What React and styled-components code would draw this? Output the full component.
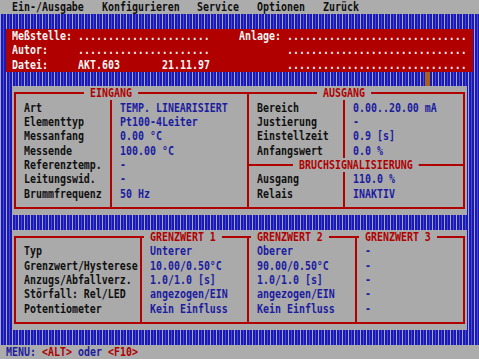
import React from "react";
import styled, { createGlobalStyle } from "styled-components";

// DOS text screen: 80 columns x 25 rows, one cell = 479/80 x 359/25 px
const COLS = 80;
const ROWS = 25;
const CELL_W = 479 / COLS;
const CELL_H = 359 / ROWS;

const tones = {
  black: "#101010",
  blue: "#1c1ca0",
  red: "#b00000",
  white: "#f6f6f6",
};

const Global = createGlobalStyle`
  html, body {
    margin: 0;
    padding: 0;
    background: #1a1ab4;
  }
`;

const Screen = styled.div`
  width: 479px;
  height: 359px;
  display: grid;
  grid-template-columns: repeat(${COLS}, ${CELL_W}px);
  grid-template-rows: repeat(${ROWS}, ${CELL_H}px);
  overflow: hidden;
  background-color: #1a1ab0;
  background-image: repeating-linear-gradient(
    90deg,
    #a4a4f4 0 1px,
    #1a1ab0 1px 3px,
    #4848dc 3px 4px,
    #1a1ab0 4px 6px
  );
  font-family: "DejaVu Sans Mono", "Liberation Mono", monospace;
  font-weight: bold;
  font-size: 12.5px;
`;

const Bar = styled.div`
  grid-column: 1 / -1;
  grid-row: ${(p) => p.$r + 1};
  background: #acacac;
`;

const RedPanel = styled.div`
  grid-column: ${(p) => p.$c + 1} / span ${(p) => p.$w};
  grid-row: ${(p) => p.$r + 1} / span ${(p) => p.$h};
  background: #b00000;
`;

const Panel = styled.div`
  grid-column: ${(p) => p.$c + 1} / span ${(p) => p.$w};
  grid-row: ${(p) => p.$r + 1} / span ${(p) => p.$h};
  background: #aaaaaa;
`;

const Frame = styled.div`
  grid-column: ${(p) => p.$c + 1} / span ${(p) => p.$w};
  grid-row: ${(p) => p.$r + 1} / span ${(p) => p.$h};
  margin: 6px 2px;
  border: 2px solid #b00000;
`;

const VLine = styled.div`
  grid-column: ${(p) => p.$c + 1};
  grid-row: ${(p) => p.$r + 1} / span ${(p) => p.$h};
  justify-self: center;
  width: 2px;
  margin: 7px 0;
  background: #b00000;
`;

const HLine = styled.div`
  grid-column: ${(p) => p.$c + 1} / span ${(p) => p.$w};
  grid-row: ${(p) => p.$r + 1};
  align-self: center;
  height: 2px;
  margin: 0 3px;
  background: #b00000;
`;

const Mark = styled.div`
  grid-column: ${(p) => p.$c + 1};
  grid-row: ${(p) => p.$r + 1};
  justify-self: center;
  width: 5px;
  background: #a4601c;
`;

// one run of characters starting at a given cell; glyphs squeezed to the 6px cell
const Text = styled.span`
  grid-column: ${(p) => p.$c + 1};
  grid-row: ${(p) => p.$r + 1};
  justify-self: start;
  align-self: center;
  width: max-content;
  white-space: pre;
  line-height: 14px;
  color: ${(p) => tones[p.$tone || "black"]};
  background: ${(p) => (p.$title ? "#aaaaaa" : "transparent")};
  transform: scaleX(0.7956);
  transform-origin: 0 50%;
`;

const menu = [
  ["Ein-/Ausgabe", 2],
  ["Konfigurieren", 17],
  ["Service", 33],
  ["Optionen", 43],
  ["Zurück", 54],
];

const dots = (n) => ".".repeat(n);

const header = [
  ["Meßstelle:", 2, 2],
  [dots(22), 13, 2],
  ["Anlage:", 40, 2],
  [dots(30), 48, 2],
  ["Autor:", 2, 3],
  [dots(22), 13, 3],
  [dots(30), 48, 3],
  ["Datei:", 2, 4],
  ["AKT.603", 13, 4],
  ["21.11.97", 27, 4],
  [dots(30), 48, 4],
];

const eingang = [
  ["Art", "TEMP. LINEARISIERT"],
  ["Elementtyp", "Pt100-4Leiter"],
  ["Messanfang", "0.00 °C"],
  ["Messende", "100.00 °C"],
  ["Referenztemp.", "-"],
  ["Leitungswid.", "-"],
  ["Brummfrequenz", "50 Hz"],
];

const ausgang = [
  ["Bereich", "0.00..20.00 mA", 7],
  ["Justierung", "-", 8],
  ["Einstellzeit", "0.9 [s]", 9],
  ["Anfangswert", "0.0 %", 10],
  ["Ausgang", "110.0 %", 12],
  ["Relais", "INAKTIV", 13],
];

const grenzwerte = [
  ["Typ", "Unterer", "Oberer", "-"],
  ["Grenzwert/Hysterese", "10.00/0.50°C", "90.00/0.50°C", "-"],
  ["Anzugs/Abfallverz.", "1.0/1.0 [s]", "1.0/1.0 [s]", "-"],
  ["Störfall: Rel/LED", "angezogen/EIN", "angezogen/EIN", "-"],
  ["Potentiometer", "Kein Einfluss", "Kein Einfluss", "-"],
];

export default function App() {
  return (
    <>
      <Global />
      <Screen>
        <Bar $r={0} />
        <Bar $r={24} />
        <RedPanel $c={1} $r={2} $w={78} $h={3} />
        <Mark $c={71} $r={5} />

        <Panel $c={2} $r={6} $w={76} $h={9} />
        <Frame $c={2} $r={6} $w={76} $h={9} />
        <VLine $c={18} $r={6} $h={9} />
        <VLine $c={41} $r={6} $h={9} />
        <VLine $c={57} $r={6} $h={9} />
        <HLine $c={41} $r={11} $w={37} />

        <Panel $c={2} $r={16} $w={76} $h={7} />
        <Frame $c={2} $r={16} $w={76} $h={7} />
        <VLine $c={23} $r={16} $h={7} />
        <VLine $c={41} $r={16} $h={7} />
        <VLine $c={59} $r={16} $h={7} />

        {menu.map(([label, c]) => (
          <Text key={label} $c={c} $r={0}>
            {label}
          </Text>
        ))}

        {header.map(([txt, c, r]) => (
          <Text key={`${c}-${r}`} $c={c} $r={r} $tone="white">
            {txt}
          </Text>
        ))}

        <Text $c={14} $r={6} $tone="red" $title>
          {" EINGANG "}
        </Text>
        <Text $c={53} $r={6} $tone="red" $title>
          {" AUSGANG "}
        </Text>
        <Text $c={49} $r={11} $tone="red" $title>
          {" BRUCHSIGNALISIERUNG "}
        </Text>
        {eingang.map(([label, value], i) => (
          <React.Fragment key={label}>
            <Text $c={4} $r={7 + i}>{label}</Text>
            <Text $c={20} $r={7 + i} $tone="blue">{value}</Text>
          </React.Fragment>
        ))}
        {ausgang.map(([label, value, r]) => (
          <React.Fragment key={label}>
            <Text $c={43} $r={r}>{label}</Text>
            <Text $c={59} $r={r} $tone="blue">{value}</Text>
          </React.Fragment>
        ))}

        <Text $c={24} $r={16} $tone="red" $title>
          {" GRENZWERT 1 "}
        </Text>
        <Text $c={42} $r={16} $tone="red" $title>
          {" GRENZWERT 2 "}
        </Text>
        <Text $c={60} $r={16} $tone="red" $title>
          {" GRENZWERT 3 "}
        </Text>
        {grenzwerte.map(([label, g1, g2, g3], i) => (
          <React.Fragment key={label}>
            <Text $c={4} $r={17 + i}>{label}</Text>
            <Text $c={25} $r={17 + i} $tone="blue">{g1}</Text>
            <Text $c={43} $r={17 + i} $tone="blue">{g2}</Text>
            <Text $c={61} $r={17 + i} $tone="blue">{g3}</Text>
          </React.Fragment>
        ))}

        <Text $c={1} $r={24} $tone="blue">MENU:</Text>
        <Text $c={7} $r={24} $tone="red">{"<ALT>"}</Text>
        <Text $c={13} $r={24} $tone="blue">oder</Text>
        <Text $c={18} $r={24} $tone="red">{"<F10>"}</Text>
      </Screen>
    </>
  );
}
